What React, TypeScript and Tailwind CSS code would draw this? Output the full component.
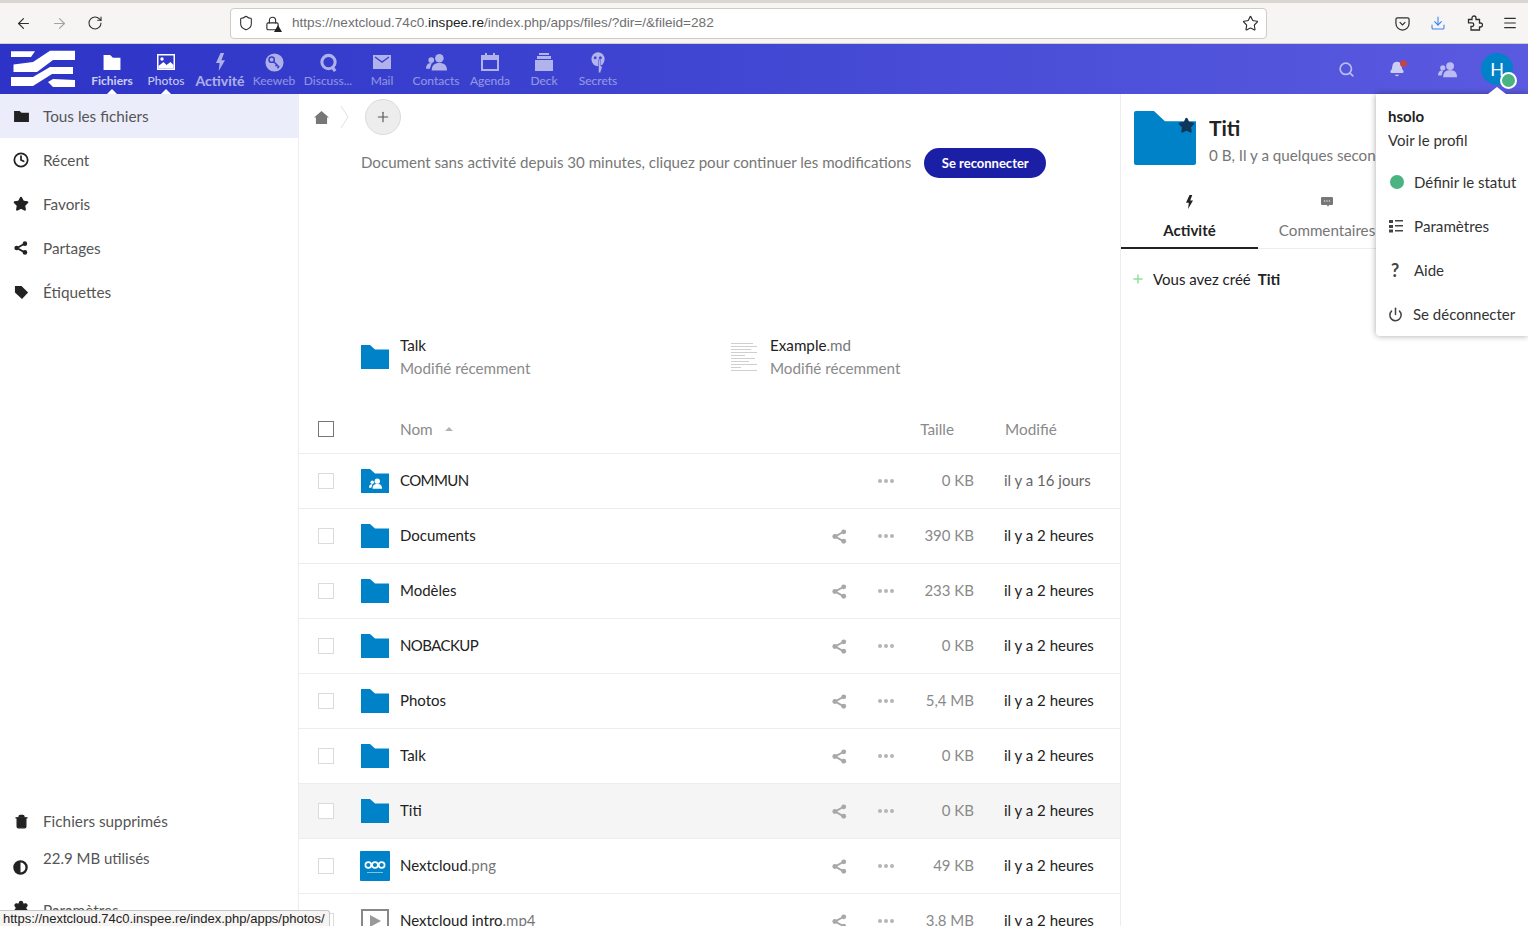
import { Bell, Clock, Download, Menu, Plus, Power, RotateCw, Search, Settings, Shield, Star, Trash2, ArrowLeft, ArrowRight, Lock } from 'lucide-react'
import type { ReactNode } from 'react'

const font = 'font-["Lato","Noto_Sans",sans-serif]'

function Folder({ className = '', rounded, children }: { className?: string; rounded?: boolean; children?: ReactNode }) {
  return (
    <span className={`relative inline-block ${className}`}>
      <svg viewBox="0 0 28 24" className={`block h-full w-full ${rounded ? 'rounded-[2px]' : ''}`} preserveAspectRatio="none">
        <path d="M0 0h9l5 4.500h14V24H0z" fill="#0082c9" />
      </svg>
      {children}
    </span>
  )
}

function ShareIcon({ className = '' }: { className?: string }) {
  return (
    <svg viewBox="0 0 16 16" className={className} fill="currentColor">
      <circle cx="12.5" cy="3" r="2.6" />
      <circle cx="3" cy="8" r="2.6" />
      <circle cx="12.5" cy="13" r="2.6" />
      <path d="M3 7l9-5 1 1.800-9 5zM3 9l9 5 1-1.800-9-5z" />
    </svg>
  )
}

function PeopleIcon({ className = '' }: { className?: string }) {
  return (
    <svg viewBox="0 0 22 18" className={className} fill="white">
      <circle cx="14" cy="5" r="4.500" />
      <path d="M6 18c0-6 3-8 8-8s8 2 8 8z" />
      <circle cx="5.500" cy="7" r="3" />
      <path d="M0 16c0-4 2-6 6-6l-2 6z" />
    </svg>
  )
}

function Dots() {
  return (
    <span className="flex items-center gap-[2px]">
      <span className="h-[4px] w-[4px] rounded-full bg-[#b5b5b5]" />
      <span className="h-[4px] w-[4px] rounded-full bg-[#b5b5b5]" />
      <span className="h-[4px] w-[4px] rounded-full bg-[#b5b5b5]" />
    </span>
  )
}

function NavItem({ label, icon, active, strong }: { label: string; icon: ReactNode; active?: boolean; strong?: boolean }) {
  return (
    <div className="relative flex h-[50px] w-[54px] flex-col items-center pt-[8px] text-white">
      <span className={`flex h-[20px] items-center ${active ? '' : 'opacity-60'}`}>{icon}</span>
      <span
        className={`mt-[1px] whitespace-nowrap leading-[16px] ${strong ? 'text-[14px] font-bold opacity-60' : 'text-[12px]'} ${active ? 'opacity-75' : 'opacity-45'} ${label === 'Fichiers' ? 'font-bold' : ''}`}
      >
        {label}
      </span>
      {active ? (
        <span className="absolute bottom-0 left-1/2 h-0 w-0 -translate-x-1/2 border-x-[5px] border-b-[5px] border-x-transparent border-b-white" />
      ) : null}
    </div>
  )
}

const sideItems = [
  {
    label: 'Tous les fichiers',
    active: true,
    icon: (
      <svg viewBox="0 0 16 14" className="h-[13px] w-[15px]" fill="#222">
        <path d="M0 1h6l2 2h8v10H0z" />
      </svg>
    ),
  },
  { label: 'Récent', icon: <Clock size={16} strokeWidth={2.6} color="#222" /> },
  { label: 'Favoris', icon: <Star size={16} fill="#222" color="#222" /> },
  { label: 'Partages', icon: <ShareIcon className="h-[14px] w-[14px] text-[#222]" /> },
  {
    label: 'Étiquettes',
    icon: (
      <svg viewBox="0 0 16 16" className="h-[15px] w-[15px]" fill="#222">
        <path d="M1 1h7l7 7-6.500 7L1 8z" />
      </svg>
    ),
  },
]

const rows = [
  { name: 'Documents', size: '390 KB' },
  { name: 'Modèles', size: '233 KB' },
  { name: 'NOBACKUP', size: '0 KB', caps: true },
  { name: 'Photos', size: '5,4 MB' },
  { name: 'Talk', size: '0 KB' },
  { name: 'Titi', size: '0 KB', hover: true },
]

function Row({ icon, name, ext, size, date, share = true, hover, dim, caps }: { icon: ReactNode; name: string; ext?: string; size: string; date: string; share?: boolean; hover?: boolean; dim?: boolean; caps?: boolean }) {
  return (
    <div className={`flex h-[55px] shrink-0 items-center border-b border-[#ededed] ${hover ? 'bg-[#f5f5f5]' : ''}`}>
      <span className="ml-[19px] h-[16px] w-[16px] shrink-0 border border-[#dbdbdb] bg-white" />
      <span className="ml-[26px] flex h-[30px] w-[30px] shrink-0 items-center justify-center">{icon}</span>
      <span className={`ml-[10px] flex-1 pb-[2px] text-[15px] text-[#222] ${caps ? 'tracking-[-0.6px]' : ''}`}>
        {name}
        {ext ? <span className="text-[#767676]">{ext}</span> : null}
      </span>
      <span className="flex w-[32px] justify-center text-[#a8a8a8]">{share ? <ShareIcon className="h-[15px] w-[15px]" /> : null}</span>
      <span className="ml-[15px] flex w-[32px] justify-center">
        <Dots />
      </span>
      <span className="w-[72px] pb-[2px] text-right text-[15px] text-[#8a8a8a]">{size}</span>
      <span className={`ml-[30px] w-[116px] pb-[2px] text-[15px] ${dim ? 'text-[#666]' : 'text-[#222]'}`}>{date}</span>
    </div>
  )
}

export default function App() {
  return (
    <div className={`flex h-[926px] w-[1528px] flex-col overflow-hidden bg-white ${font}`}>
      {/* browser chrome */}
      <div className="flex h-[44px] shrink-0 items-center border-t-[3px] border-b border-t-[#d9d5d0] border-b-[#d3d0cc] bg-[#f6f5f3] pr-[10px] pl-[15px] text-[#2e2e2e]">
        <ArrowLeft size={17} strokeWidth={1.6} />
        <ArrowRight size={17} strokeWidth={1.6} className="ml-[19px] text-[#a3a3a3]" />
        <RotateCw size={16} strokeWidth={1.6} className="ml-[19px]" />
        <div className="ml-[127px] flex h-[31px] w-[1037px] items-center rounded-[4px] border border-[#cfcbc5] bg-white px-[7px]">
          <Shield size={16} strokeWidth={1.6} />
          <span className="relative ml-[11px] flex">
            <Lock size={15} strokeWidth={1.8} />
            <span className="absolute -right-[2px] -bottom-[1px] h-0 w-0 border-x-[4px] border-b-[7px] border-x-transparent border-b-[#222]" />
          </span>
          <span className={`ml-[12px] flex-1 pt-[1px] font-["Liberation_Sans",sans-serif] text-[13.6px] text-[#6f6f6f]`}>
            https://nextcloud.74c0.<span className="text-[#222]">inspee.re</span>/index.php/apps/files/?dir=/&amp;fileid=282
          </span>
          <Star size={17} strokeWidth={1.6} />
        </div>
        <svg viewBox="0 0 16 16" className="ml-[128px] h-[15px] w-[15px]" fill="none" stroke="currentColor" strokeWidth="1.300">
          <path d="M2.500 2h11a1.500 1.500 0 0 1 1.500 1.500V8a7 7 0 0 1-14 0V3.500A1.500 1.500 0 0 1 2.500 2z" />
          <path d="M5 6.500l3 3 3-3" />
        </svg>
        <Download size={16} strokeWidth={1.6} className="ml-[20px] text-[#3b82f6]" />
        <svg viewBox="0 0 16 16" className="ml-[21px] h-[16px] w-[16px]" fill="none" stroke="currentColor" strokeWidth="1.300">
          <path d="M1.500 4.500h3.500V3a2 2 0 0 1 4 0v1.500h3.500V8h1a2 2 0 0 1 0 4h-1v3H4v-3.500h1a1.800 1.800 0 0 0 0-3.600H1.500z" />
        </svg>
        <Menu size={16} strokeWidth={1.7} className="ml-[19px]" />
      </div>

      {/* nextcloud header */}
      <div className="flex h-[50px] shrink-0 items-center bg-gradient-to-r from-[#2c33c6] to-[#5a5ae0] pr-[15px]">
        <svg viewBox="0 0 64 38" className="ml-[11px] h-[38px] w-[64px]" fill="white">
          <path d="M0 1.300h24l-4 5.700H0z" />
          <path d="M64 .7H39L22 12 2.500 14.500V22H26L42 10h22z" />
          <path d="M62 17H39L22 27H0v9h22l19-12h21z" />
          <path d="M37 32l5-3 22 1v7H42z" />
        </svg>
        <div className="ml-[10px] flex">
          <NavItem label="Fichiers" active icon={<svg viewBox="0 0 18 16" className="h-[15px] w-[18px]" fill="white"><path d="M0 0h7l3 3h8v13H0z" /></svg>} />
          <NavItem label="Photos" active icon={<svg viewBox="0 0 18 16" className="h-[16px] w-[18px]"><path d="M0 0h18v16H0z" fill="white" /><path d="M1.500 1.500h15v13h-15z" fill="#3238c9" /><circle cx="5" cy="5" r="1.700" fill="white" /><path d="M1.500 14.500V12l5-4 3 3 4-3 3 3v3.500z" fill="white" /></svg>} />
          <NavItem label="Activité" strong icon={<svg viewBox="0 0 12 20" className="h-[18px] w-[11px]" fill="white"><path d="M6 0L1 11h4l-1 9 7-12H7l3-8z" /></svg>} />
          <NavItem label="Keeweb" icon={<svg viewBox="0 0 20 20" className="h-[19px] w-[19px]"><circle cx="10" cy="10" r="9.500" fill="white" /><circle cx="7" cy="7" r="2.800" fill="none" stroke="#3f44d0" strokeWidth="1.600" /><path d="M9 9l6 6M12.500 12.500l-1.500 1.500M14.500 14.500l-1.500 1.500" stroke="#3f44d0" strokeWidth="1.600" /></svg>} />
          <NavItem label="Discuss..." icon={<svg viewBox="0 0 20 20" className="h-[19px] w-[19px]" fill="none" stroke="white" strokeWidth="3.200"><circle cx="10" cy="9.500" r="7" /><path d="M14 15l3 4" /></svg>} />
          <NavItem label="Mail" icon={<svg viewBox="0 0 18 14" className="h-[14px] w-[18px]"><path d="M0 0h18v14H0z" fill="white" /><path d="M2 2l7 5 7-5" fill="none" stroke="#4247d2" strokeWidth="1.500" /></svg>} />
          <NavItem label="Contacts" icon={<PeopleIcon className="h-[18px] w-[21px]" />} />
          <NavItem label="Agenda" icon={<svg viewBox="0 0 18 18" className="h-[18px] w-[18px]"><path d="M1 3h16v14H1z" fill="none" stroke="white" strokeWidth="2" /><path d="M1 3h16v4H1zM4 0h2v4H4zM12 0h2v4h-2z" fill="white" /></svg>} />
          <NavItem label="Deck" icon={<svg viewBox="0 0 18 18" className="h-[18px] w-[18px]" fill="white"><path d="M4 0h10v2H4zM2 3h14v3H2zM0 7h18v11H0z" /></svg>} />
          <NavItem label="Secrets" icon={<svg viewBox="0 0 16 22" className="h-[21px] w-[15px]"><ellipse cx="7.500" cy="7.500" rx="7" ry="7.500" fill="white" /><circle cx="4.500" cy="6" r="1.600" fill="#494ed6" /><circle cx="10" cy="6" r="1.600" fill="#494ed6" /><path d="M8 8h2v6l2 2-2 6H8z" fill="white" stroke="#494ed6" strokeWidth=".6" /></svg>} />
        </div>
        <div className="ml-auto flex items-center text-white">
          <Search size={17} strokeWidth={2.4} className="opacity-60" />
          <span className="relative ml-[34px] flex">
            <Bell size={16} fill="white" className="opacity-70" />
            <span className="absolute -top-[1px] right-[-2px] h-[7px] w-[7px] rounded-full bg-[#c0454f]" />
          </span>
          <PeopleIcon className="ml-[33px] h-[17px] w-[19px] opacity-60" />
          <span className="relative ml-[24px] flex h-[32px] w-[32px] items-center justify-center rounded-full bg-[#0082c9] text-[18px]">
            H
            <span className="absolute -right-[4px] -bottom-[4px] h-[17px] w-[17px] rounded-full border-2 border-white bg-[#49b382]" />
          </span>
        </div>
      </div>

      <div className="relative flex min-h-0 flex-1">
        {/* left navigation */}
        <aside className="flex w-[299px] shrink-0 flex-col border-r border-[#ededed]">
          {sideItems.map((item) => (
            <div key={item.label} className={`flex h-[44px] shrink-0 items-center pl-[13px] text-[15.300px] text-[#555] ${item.active ? 'bg-[#ecedfa]' : ''}`}>
              <span className="flex w-[16px] justify-center">{item.icon}</span>
              <span className="ml-[14px]">{item.label}</span>
            </div>
          ))}
          <div className="mt-auto flex flex-col">
            <div className="flex h-[38px] items-center pl-[13px] text-[15.300px] text-[#555]">
              <Trash2 size={15} fill="#222" color="#222" className="ml-[1px]" />
              <span className="ml-[14px]">Fichiers supprimés</span>
            </div>
            <div className="flex h-[38px] items-center pl-[13px] text-[15px] text-[#555]">
              <svg viewBox="0 0 16 16" className="h-[15px] w-[15px] translate-y-[8px]">
                <circle cx="8" cy="8" r="6.500" fill="white" stroke="#222" strokeWidth="2.500" />
                <path d="M8 1.500A6.500 6.500 0 0 0 8 14.500z" fill="#222" />
              </svg>
              <span className="ml-[15px] pb-[2px]">22.9 MB utilisés</span>
            </div>
            <div className="flex h-[48px] items-start pt-[21px] pl-[13px] text-[15.300px] text-[#555]">
              <Settings size={16} fill="#222" color="#222" className="mt-[1px]" />
              <span className="ml-[14px]">Paramètres</span>
            </div>
          </div>
        </aside>

        {/* file list */}
        <main className="flex w-[822px] shrink-0 flex-col overflow-hidden border-r border-[#ededed]">
          <div className="flex h-[46px] shrink-0 items-center pl-[15px]">
            <svg viewBox="0 0 16 14" className="h-[13px] w-[15px]" fill="#777">
              <path d="M8 0l8 7h-2v7H2V7H0z" />
            </svg>
            <svg viewBox="0 0 10 24" className="ml-[11px] h-[24px] w-[10px]" fill="none" stroke="#e1e1e1">
              <path d="M1 1l7 11-7 11" />
            </svg>
            <span className="ml-[15px] flex h-[36px] w-[36px] items-center justify-center rounded-full border border-[#dbdbdb] bg-[#ededed] text-[#555]">
              <Plus size={16} strokeWidth={1.7} />
            </span>
          </div>
          <div className="mt-[8px] flex h-[30px] shrink-0 items-center pl-[62px] text-[15.100px] text-[#777]">
            <span className="pb-[2px]">Document sans activité depuis 30 minutes, cliquez pour continuer les modifications</span>
            <span className="ml-[13px] flex h-[30px] w-[122px] items-center justify-center rounded-full bg-[#1a1fa6] pt-[2px] text-[13px] font-bold text-white">
              Se reconnecter
            </span>
          </div>
          <div className="mt-[156px] flex shrink-0 pl-[62px]">
            <div className="flex w-[370px] items-center">
              <Folder className="h-[24px] w-[28px]" />
              <div className="ml-[11px] leading-[23px]">
                <div className="text-[15.200px] text-[#222]">Talk</div>
                <div className="text-[15.200px] text-[#8a8a8a]">Modifié récemment</div>
              </div>
            </div>
            <div className="flex items-center">
              <div className="flex h-[32px] w-[28px] flex-col justify-center gap-[2px]">
                {[22, 26, 20, 26, 14, 24, 18, 26, 10, 26].map((width, index) => (
                  <span key={index} className="h-[1px] bg-[#cfcfcf]" style={{ width }} />
                ))}
              </div>
              <div className="ml-[11px] leading-[23px]">
                <div className="text-[15.200px] text-[#222]">
                  Example<span className="text-[#767676]">.md</span>
                </div>
                <div className="text-[15.200px] text-[#8a8a8a]">Modifié récemment</div>
              </div>
            </div>
          </div>
          <div className="mt-[25px] flex h-[49px] shrink-0 items-center border-b border-[#ededed] text-[15.300px] text-[#8a8a8a]">
            <span className="ml-[19px] h-[16px] w-[16px] border border-[#767676]" />
            <span className="ml-[66px]">Nom</span>
            <span className="ml-[12px] h-0 w-0 border-x-[4px] border-b-[4px] border-x-transparent border-b-[#b3b3b3]" />
            <span className="ml-auto">Taille</span>
            <span className="ml-[51px] w-[115px]">Modifié</span>
          </div>
          <Row
            icon={
              <Folder className="h-[24px] w-[28px]">
                <PeopleIcon className="absolute top-[9px] left-[8px] h-[11px] w-[13px]" />
              </Folder>
            }
            name="COMMUN"
            size="0 KB"
            date="il y a 16 jours"
            share={false}
            dim
            caps
          />
          {rows.map((row) => (
            <Row key={row.name} icon={<Folder className="h-[24px] w-[28px]" />} name={row.name} size={row.size} date="il y a 2 heures" hover={row.hover} caps={row.caps} />
          ))}
          <Row
            icon={
              <span className="flex h-[30px] w-[30px] flex-col items-center justify-center rounded-[1px] bg-[#0082c9] text-white">
                <svg viewBox="0 0 26 12" className="h-[10px] w-[24px]" fill="none" stroke="white" strokeWidth="2">
                  <circle cx="5" cy="6" r="3.500" />
                  <circle cx="13" cy="6" r="3.500" />
                  <circle cx="21" cy="6" r="3.500" />
                </svg>
                <span className="mt-[2px] h-[1px] w-[16px] bg-white/50" />
              </span>
            }
            name="Nextcloud"
            ext=".png"
            size="49 KB"
            date="il y a 2 heures"
          />
          <Row
            icon={
              <span className="flex h-[24px] w-[28px] items-center justify-center border-2 border-[#888] bg-white">
                <span className="h-0 w-0 border-y-[6px] border-l-[11px] border-y-transparent border-l-[#999]" />
              </span>
            }
            name="Nextcloud intro"
            ext=".mp4"
            size="3,8 MB"
            date="il y a 2 heures"
          />
        </main>

        {/* details sidebar */}
        <aside className="flex min-w-0 flex-1 flex-col">
          <div className="flex items-start pt-[17px] pl-[13px]">
            <Folder rounded className="h-[54px] w-[62px] shrink-0">
              <Star size={17} fill="#10375a" color="#10375a" className="absolute top-[6px] right-[1px]" />
            </Folder>
            <div className="ml-[13px] min-w-0 pt-[3px]">
              <div className="text-[21px] leading-[28px] font-bold text-[#222]">Titi</div>
              <div className="whitespace-nowrap text-[15.200px] leading-[26px] text-[#767676]">0 B, Il y a quelques secondes</div>
            </div>
          </div>
          <div className="mt-[17px] flex h-[64px] shrink-0 border-b border-[#ededed]">
            <div className="-mb-[1px] flex w-[137px] flex-col items-center border-b-2 border-[#222] pt-[10px] text-[15px] font-bold text-[#222]">
              <svg viewBox="0 0 12 20" className="h-[14px] w-[9px]" fill="#222">
                <path d="M6 0L1 11h4l-1 9 7-12H7l3-8z" />
              </svg>
              <span className="mt-[10px]">Activité</span>
            </div>
            <div className="flex w-[138px] flex-col items-center pt-[10px] text-[15.200px] text-[#767676]">
              <svg viewBox="0 0 14 14" className="h-[14px] w-[14px]">
                <path d="M2 2h10a1 1 0 0 1 1 1v6a1 1 0 0 1-1 1H9l-1 2-1-2H2a1 1 0 0 1-1-1V3a1 1 0 0 1 1-1z" fill="#777" />
                <path d="M4 6h1.200M6.400 6h1.200M8.800 6H10" stroke="white" strokeWidth="1.200" />
              </svg>
              <span className="mt-[10px]">Commentaires</span>
            </div>
          </div>
          <div className="mt-[19px] flex items-center pl-[10px] text-[15px] text-[#222]">
            <Plus size={14} strokeWidth={2.5} className="text-[#8ee09a]" />
            <span className="ml-[8px]">Vous avez créé</span>
            <span className="ml-[7px] font-bold">Titi</span>
          </div>
        </aside>

        {/* user menu */}
        <div className="absolute top-0 right-0 h-[242px] w-[152px] rounded-bl-[4px] bg-white pl-[12px] text-[15px] text-[#333] shadow-[0_0_6px_rgba(0,0,0,0.35)]">
          <div className="pt-[10px] leading-[24px]">
            <div className="font-bold text-[#222]">hsolo</div>
            <div>Voir le profil</div>
          </div>
          <div className="mt-[8px] flex h-[44px] items-center">
            <span className="ml-[2px] h-[14px] w-[14px] rounded-full bg-[#49b382]" />
            <span className="ml-[10px] whitespace-nowrap">Définir le statut</span>
          </div>
          <div className="flex h-[44px] items-center">
            <svg viewBox="0 0 14 14" className="ml-[1px] h-[14px] w-[14px]" fill="#444">
              <path d="M0 1h4v3H0zM6 1h8v1.500H6zM0 6h4v3H0zM6 6h8v1.500H6zM0 10.500h4v3H0zM6 11h8v1.500H6z" />
            </svg>
            <span className="ml-[11px] text-[15.200px]">Paramètres</span>
          </div>
          <div className="flex h-[44px] items-center">
            <span className="ml-[3px] w-[11px] text-[18px] font-bold text-[#444]">?</span>
            <span className="ml-[12px]">Aide</span>
          </div>
          <div className="flex h-[44px] items-center">
            <Power size={15} strokeWidth={2.4} className="text-[#444]" />
            <span className="ml-[10px] whitespace-nowrap">Se déconnecter</span>
          </div>
        </div>
        <span className="absolute -top-[7px] right-[22px] h-0 w-0 border-x-[9px] border-b-[7px] border-x-transparent border-b-white" />

        {/* link status tooltip */}
        <div className={`absolute bottom-0 left-0 flex h-[16px] w-[330px] items-center rounded-tr-[3px] border-t border-r border-[#c8c8c8] bg-[#f6f5f3] pl-[3px] font-["Liberation_Sans",sans-serif] text-[13px] whitespace-nowrap text-[#222]`}>
          https://nextcloud.74c0.inspee.re/index.php/apps/photos/
        </div>
      </div>
    </div>
  )
}
